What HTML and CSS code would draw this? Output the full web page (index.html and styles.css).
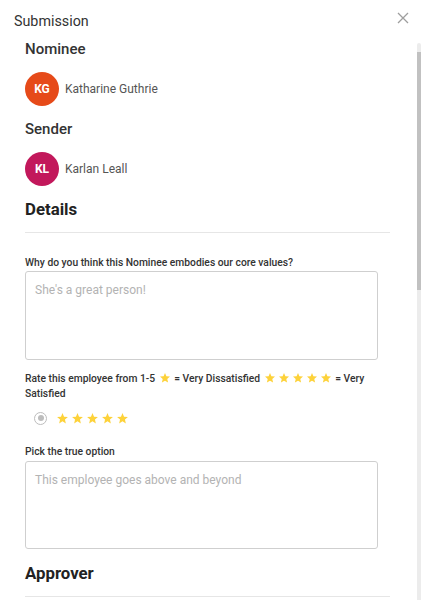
FILE: index.html
```html
<!DOCTYPE html>
<html lang="en">
<head>
    <meta charset="UTF-8">
    <meta name="viewport" content="width=device-width, initial-scale=1.0">
    <title>Submission</title>
    <link rel="stylesheet" href="styles.css">
</head>
<body>
    <div class="dialog">
        <div class="dialog-header">
            <span class="dialog-title">Submission</span>
            <button class="close-btn" aria-label="Close">
                <svg width="12" height="12" viewBox="0 0 12 12">
                    <path d="M1 1L11 11M11 1L1 11" stroke="#9e9e9e" stroke-width="1.3" fill="none"/>
                </svg>
            </button>
        </div>

        <div class="dialog-body">
            <h3 class="section-title">Nominee</h3>
            <div class="person">
                <div class="avatar avatar-orange">KG</div>
                <span class="person-name">Katharine Guthrie</span>
            </div>

            <h3 class="section-title sender">Sender</h3>
            <div class="person">
                <div class="avatar avatar-pink">KL</div>
                <span class="person-name">Karlan Leall</span>
            </div>

            <h2 class="block-title">Details</h2>
            <div class="divider"></div>

            <div class="field first-field">
                <label class="field-label">Why do you think this Nominee embodies our core values?</label>
                <div class="text-box">She's a great person!</div>
            </div>

            <div class="rate-text">
                <span>Rate this employee from 1-5</span>
                <span class="star-sm"><svg viewBox="0 0 24 24"><path d="M12 17.27L18.18 21l-1.64-7.03L22 9.24l-7.19-.61L12 2 9.19 8.63 2 9.24l5.46 4.73L5.82 21z"/></svg></span>
                <span>= Very Dissatisfied</span>
                <span class="star-sm"><svg viewBox="0 0 24 24"><path d="M12 17.27L18.18 21l-1.64-7.03L22 9.24l-7.19-.61L12 2 9.19 8.63 2 9.24l5.46 4.73L5.82 21z"/></svg></span><span class="star-sm"><svg viewBox="0 0 24 24"><path d="M12 17.27L18.18 21l-1.64-7.03L22 9.24l-7.19-.61L12 2 9.19 8.63 2 9.24l5.46 4.73L5.82 21z"/></svg></span><span class="star-sm"><svg viewBox="0 0 24 24"><path d="M12 17.27L18.18 21l-1.64-7.03L22 9.24l-7.19-.61L12 2 9.19 8.63 2 9.24l5.46 4.73L5.82 21z"/></svg></span><span class="star-sm"><svg viewBox="0 0 24 24"><path d="M12 17.27L18.18 21l-1.64-7.03L22 9.24l-7.19-.61L12 2 9.19 8.63 2 9.24l5.46 4.73L5.82 21z"/></svg></span><span class="star-sm"><svg viewBox="0 0 24 24"><path d="M12 17.27L18.18 21l-1.64-7.03L22 9.24l-7.19-.61L12 2 9.19 8.63 2 9.24l5.46 4.73L5.82 21z"/></svg></span>
                <span>= Very</span>
                <span>Satisfied</span>
            </div>

            <div class="rating-row">
                <span class="radio"><span class="radio-dot"></span></span>
                <span class="stars">
                    <svg viewBox="0 0 24 24"><path d="M12 17.27L18.18 21l-1.64-7.03L22 9.24l-7.19-.61L12 2 9.19 8.63 2 9.24l5.46 4.73L5.82 21z"/></svg>
                    <svg viewBox="0 0 24 24"><path d="M12 17.27L18.18 21l-1.64-7.03L22 9.24l-7.19-.61L12 2 9.19 8.63 2 9.24l5.46 4.73L5.82 21z"/></svg>
                    <svg viewBox="0 0 24 24"><path d="M12 17.27L18.18 21l-1.64-7.03L22 9.24l-7.19-.61L12 2 9.19 8.63 2 9.24l5.46 4.73L5.82 21z"/></svg>
                    <svg viewBox="0 0 24 24"><path d="M12 17.27L18.18 21l-1.64-7.03L22 9.24l-7.19-.61L12 2 9.19 8.63 2 9.24l5.46 4.73L5.82 21z"/></svg>
                    <svg viewBox="0 0 24 24"><path d="M12 17.27L18.18 21l-1.64-7.03L22 9.24l-7.19-.61L12 2 9.19 8.63 2 9.24l5.46 4.73L5.82 21z"/></svg>
                </span>
            </div>

            <div class="field second-field">
                <label class="field-label">Pick the true option</label>
                <div class="text-box">This employee goes above and beyond</div>
            </div>

            <h2 class="block-title approver">Approver</h2>
            <div class="divider"></div>
        </div>

        <!-- scroll indicator drawn over the right edge of the body -->
        <div class="scroll-track">
            <div class="scroll-thumb"></div>
        </div>
    </div>
</body>
</html>
```

FILE: styles.css
```css
* {
    box-sizing: border-box;
}
body {
    margin: 0;
    font-family: Roboto, 'Liberation Sans', sans-serif;
    background-color: #fff;
    color: #333;
}
.dialog {
    position: relative;
    width: 421px;
    height: 600px;
    display: flex;
    flex-direction: column;
    overflow: hidden;
}
.dialog-header {
    height: 39px;
    flex-shrink: 0;
    display: flex;
    justify-content: space-between;
    align-items: flex-start;
    padding: 11px 12px 0 14px;
}
.dialog-title {
    font-size: 14.3px;
    line-height: 20px;
    color: #333;
}
.close-btn {
    border: none;
    background: none;
    padding: 0;
    margin-top: 1px;
    width: 12px;
    height: 12px;
    cursor: pointer;
}
.close-btn svg {
    display: block;
}
.dialog-body {
    flex: 1;
    overflow: hidden;
    padding: 0 31px 0 25px;
}
.scroll-track {
    position: absolute;
    top: 43px;
    right: 0;
    bottom: 0;
    width: 4px;
    background-color: #ececec;
    border-radius: 2px 2px 0 0;
    padding-top: 9px;
}
.scroll-thumb {
    height: 238px;
    background-color: #c1c1c1;
}
.section-title {
    margin: 0;
    font-size: 15px;
    font-weight: 500;
    line-height: 20px;
    color: #333;
}
.section-title.sender {
    margin-top: 13px;
}
.person {
    display: flex;
    align-items: center;
    gap: 6px;
    margin-top: 13px;
}
.avatar {
    width: 34px;
    height: 34px;
    border-radius: 50%;
    display: flex;
    align-items: center;
    justify-content: center;
    color: #fff;
    font-size: 12px;
    font-weight: 700;
}
.avatar-orange {
    background-color: #e64a19;
}
.avatar-pink {
    background-color: #c2185b;
}
.person-name {
    font-size: 12px;
    color: #555;
}
.block-title {
    margin: 12px 0 0;
    font-size: 16.8px;
    font-weight: 700;
    line-height: 22px;
    color: #222;
}
.block-title.approver {
    margin-top: 13px;
}
.divider {
    height: 1px;
    background-color: #e6e6e6;
    margin-top: 12px;
}
.field-label {
    display: block;
    font-size: 10.3px;
    font-weight: 500;
    line-height: 14px;
    color: #333;
    margin-bottom: 1px;
}
.first-field {
    margin-top: 23px;
}
.second-field {
    margin-top: 19px;
}
.second-field .field-label {
    margin-bottom: 2px;
}
.text-box {
    width: 353px;
    height: 89px;
    border: 1px solid #cfcfcf;
    border-radius: 3px;
    padding: 10px 9px;
    font-size: 12px;
    line-height: 16px;
    color: #b3b3b3;
}
.second-field .text-box {
    height: 88px;
}
.rate-text {
    margin-top: 11px;
    font-size: 10.3px;
    font-weight: 500;
    line-height: 15px;
    color: #333;
}
.star-sm svg {
    width: 12px;
    height: 12px;
    fill: #fdd23a;
    vertical-align: -2px;
    margin: 0 1px;
}
.rating-row {
    display: flex;
    align-items: center;
    height: 16px;
    margin-top: 9px;
    padding-left: 9px;
}
.radio {
    width: 13px;
    height: 13px;
    border: 1.5px solid #bdbdbd;
    border-radius: 50%;
    display: flex;
    align-items: center;
    justify-content: center;
}
.radio-dot {
    width: 6px;
    height: 6px;
    border-radius: 50%;
    background-color: #bdbdbd;
}
.stars {
    display: flex;
    gap: 2px;
    margin-left: 9px;
}
.stars svg {
    width: 13px;
    height: 13px;
    fill: #fdd23a;
}
```
